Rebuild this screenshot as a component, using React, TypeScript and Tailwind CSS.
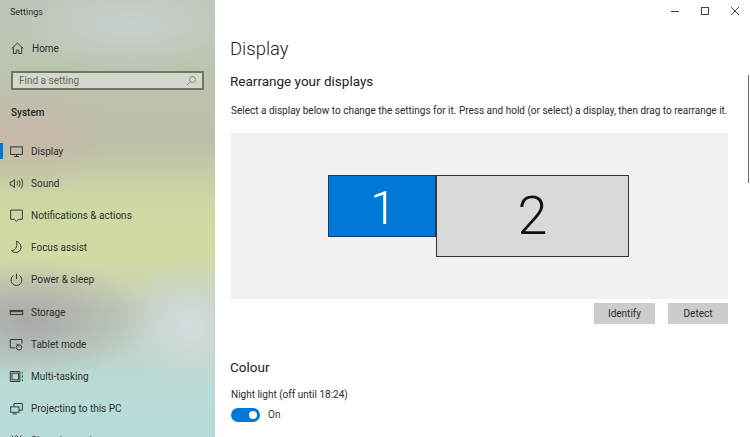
import type { ReactNode } from "react";

const Icon = ({ children }: { children: ReactNode }) => (
  <svg width="15" height="15" viewBox="0 0 18 18" fill="none" stroke="#2f3331" strokeWidth="1.150" className="shrink-0">
    {children}
  </svg>
);

const menu = [
  {
    label: "Display",
    active: true,
    icon: (
      <>
        <rect x="2" y="3.500" width="14" height="9" />
        <path d="M6 15h6M9 12.500V15" />
      </>
    ),
  },
  {
    label: "Sound",
    icon: (
      <>
        <path d="M1.500 7v4h2l3 3V4l-3 3z" />
        <path d="M9.500 6.500c1 1.400 1 3.600 0 5M12 5c1.600 2.400 1.600 5.600 0 8M14.500 3c2.400 3.400 2.400 8.600 0 12" />
      </>
    ),
  },
  {
    label: "Notifications & actions",
    icon: <path d="M2 2.500h14v11h-4.500L9 16l-2.500-2.500H2z" />,
  },
  {
    label: "Focus assist",
    icon: <path d="M9 1.500c3 1 5.500 3.800 5.500 7.200 0 3.600-3 6.300-6.300 6.300-2.200 0-4.200-1-5.200-2.500 3.500.5 7.700-2.800 6-11z" />,
  },
  {
    label: "Power & sleep",
    icon: (
      <>
        <path d="M5.500 4.200a6.500 6.500 0 1 0 7 0" />
        <path d="M9 2v6.500" />
      </>
    ),
  },
  {
    label: "Storage",
    icon: (
      <>
        <rect x="1.500" y="6.500" width="15" height="5" />
        <path d="M1.500 8h15" />
      </>
    ),
  },
  {
    label: "Tablet mode",
    icon: (
      <>
        <path d="M7.500 13H1.500V3h14v5" />
        <circle cx="12" cy="12.500" r="3.200" />
        <path d="M9 8l3 3.500" />
      </>
    ),
  },
  {
    label: "Multi-tasking",
    icon: (
      <>
        <rect x="3.500" y="5" width="8" height="8" />
        <path d="M1.500 3v12M13 3v12M1.500 3H13M1.500 15H13M16 3.500v2M16 7.500v3M16 12.500v2" />
      </>
    ),
  },
  {
    label: "Projecting to this PC",
    icon: (
      <>
        <path d="M6 6V3h10v8h-4" />
        <rect x="2" y="7" width="10" height="6.500" />
        <path d="M4.500 15.500h5" />
      </>
    ),
  },
  {
    label: "Shared experiences",
    icon: <path d="M3 3l3 3 3-3M9 3l3 3 3-3" />,
  },
];

const sidebarBg =
  "bg-[radial-gradient(ellipse_85px_55px_at_30px_135px,#c9b8a9_0%,transparent_100%),radial-gradient(ellipse_125px_60px_at_30px_320px,#a9a9a8_0%,transparent_100%),radial-gradient(ellipse_75px_65px_at_190px_325px,#d3dcdf_0%,transparent_100%),radial-gradient(ellipse_120px_45px_at_130px_25px,#c8d0cd_0%,transparent_100%),linear-gradient(180deg,#bdc5b9_0px,#bcc5ae_70px,#bbbfa9_140px,#cfd8a4_205px,#d2dba6_260px,#c2cdb9_310px,#b9dbd6_385px,#b7dcd9_437px)]";

export default function App() {
  return (
    <div className="flex h-[437px] w-[750px] overflow-hidden bg-white font-['Roboto',sans-serif] text-[10px] text-[#1f1f1f]">
      <aside className={`flex w-[215px] shrink-0 flex-col ${sidebarBg}`}>
        <div className="pl-[10px] pt-[6px] text-[9px] leading-[12px] text-[#2c2c2c]">Settings</div>

        <div className="mt-[23px] flex h-[18px] items-center pl-[10px] text-[#2a2d2a]">
          <Icon>
            <path d="M2 9l7-6.500L16 9M4 7.500V15h3.500v-4h3v4H14V7.500" />
          </Icon>
          <span className="ml-[7px]">Home</span>
        </div>

        <div className="ml-[11px] mt-[15px] flex h-[21px] w-[193px] items-center justify-between border-2 border-[#6f756a] bg-[#d9dccf]/80 pl-[6px] pr-[5px] text-[#666a60]">
          <span>Find a setting</span>
          <svg width="11" height="11" viewBox="0 0 11 11" fill="none" stroke="#8a8e84">
            <circle cx="6.500" cy="4.500" r="3" />
            <path d="M4.500 6.500L1 10" />
          </svg>
        </div>

        <div className="ml-[11px] mt-[15px] h-[16px] font-medium leading-[16px] text-[#24261f]">System</div>

        <nav className="mt-[14px] flex flex-col">
          {menu.map((item) => (
            <div key={item.label} className="relative flex h-[32.200px] shrink-0 items-center pl-[9px]">
              {item.active && <div className="absolute left-0 top-[8px] h-[16px] w-[3px] bg-[#0078d7]" />}
              <Icon>{item.icon}</Icon>
              <span className="ml-[7px] text-[#2c302c]">{item.label}</span>
            </div>
          ))}
        </nav>
      </aside>

      <main className="relative flex min-w-0 flex-1 flex-col pl-[15px] pr-[22px]">
        <div className="absolute right-[10px] top-[6px] flex items-center gap-[20px]">
          <svg width="10" height="10" viewBox="0 0 10 10" stroke="#444"><path d="M1 5.500h8" /></svg>
          <svg width="10" height="10" viewBox="0 0 10 10" fill="none" stroke="#444"><rect x="1.500" y="1.500" width="7" height="7" /></svg>
          <svg width="10" height="10" viewBox="0 0 10 10" stroke="#444"><path d="M1 1l8 8M9 1l-8 8" /></svg>
        </div>
        <div className="absolute right-[1px] top-[75px] h-[108px] w-[1.500px] bg-[#6f6f6f]" />

        <h1 className="mt-[35px] text-[18.500px] font-light leading-[28px] text-[#222]">Display</h1>
        <h2 className="mt-[8px] text-[13.500px] leading-[20px] text-[#222]">Rearrange your displays</h2>
        <p className="ml-[1px] mt-[12px] whitespace-nowrap leading-[15px] text-[#2a2a2a]">
          Select a display below to change the settings for it. Press and hold (or select) a display, then drag to rearrange it.
        </p>

        <div className="ml-[1px] mt-[15px] flex h-[166px] w-[497px] shrink-0 items-start justify-center bg-[#f1f1f1] pr-[2px] pt-[42px]">
          <div className="flex h-[62px] w-[108px] items-center justify-center border border-[#1f3c58] bg-[#0078d7] pl-[2px] pt-[3px] text-[46px] font-light leading-none text-white">
            1
          </div>
          <div className="flex h-[82px] w-[193px] items-center justify-center border border-[#333333] bg-[#d9d9d9] text-[54px] font-light leading-none text-[#111]">
            2
          </div>
        </div>

        <div className="ml-[1px] mt-[4px] flex w-[497px] justify-end gap-[13px]">
          <button className="h-[21px] w-[61px] bg-[#cccccc] text-[#2a2a2a]">Identify</button>
          <button className="h-[21px] w-[60px] bg-[#cccccc] text-[#2a2a2a]">Detect</button>
        </div>

        <h2 className="mt-[33px] text-[13.500px] leading-[20px] text-[#222]">Colour</h2>
        <div className="ml-[1px] mt-[10px] leading-[15px] text-[#2a2a2a]">Night light (off until 18:24)</div>
        <div className="ml-[1px] mt-[5px] flex items-center">
          <div className="flex h-[14px] w-[29px] items-center justify-end rounded-full bg-[#0078d7] pr-[3px]">
            <div className="h-[8px] w-[8px] rounded-full bg-white" />
          </div>
          <span className="ml-[8px] text-[#333]">On</span>
        </div>
      </main>
    </div>
  );
}
